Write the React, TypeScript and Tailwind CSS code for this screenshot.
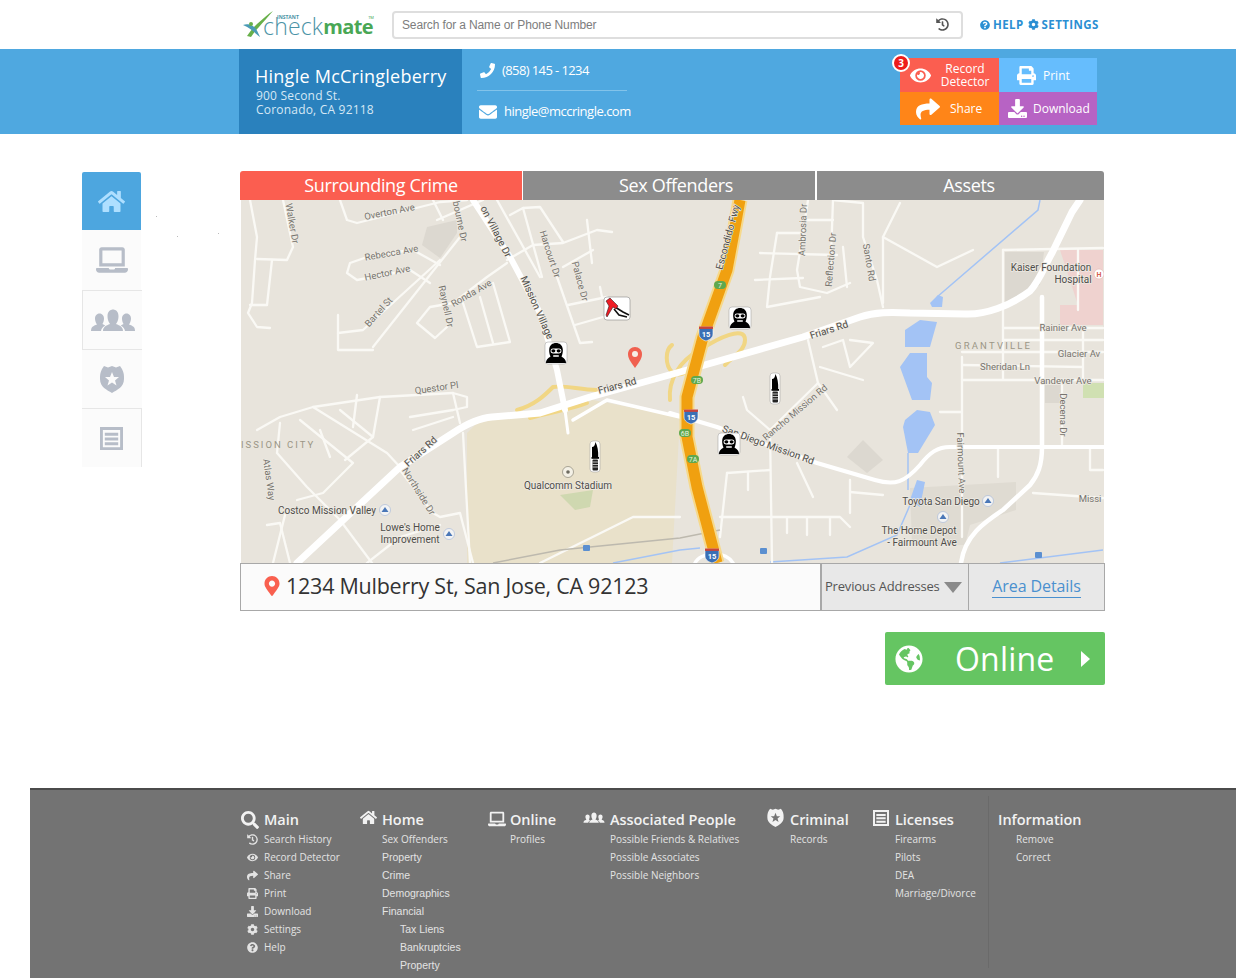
import React from "react";
import {
  FaCog,
  FaDownload,
  FaEnvelope,
  FaEye,
  FaGlobeAmericas,
  FaHistory,
  FaHome,
  FaLaptop,
  FaMapMarkerAlt,
  FaPhoneAlt,
  FaPrint,
  FaQuestionCircle,
  FaSearch,
  FaShare,
} from "react-icons/fa";

const thinRoads = [
  "250,200 257,237 255,260 252,303 248,313 257,327 270,328",
  "283,200 293,247 287,260 257,259",
  "272,260 267,305 250,305",
  "340,200 347,220 357,223 440,202 467,200",
  "437,220 483,200",
  "433,200 443,220",
  "440,265 413,250 373,255 350,263 347,273 357,280 410,270 430,283",
  "460,237 373,347",
  "338,315 338,350 373,350",
  "338,333 363,330 440,260",
  "507,263 487,277 453,303 430,307 417,323 435,338 447,327",
  "463,303 477,347 510,342 493,283",
  "480,297 493,343",
  "510,215 523,208 540,207 563,242",
  "523,208 542,277",
  "497,200 540,277",
  "507,260 533,245 563,243 597,230 612,232",
  "587,220 592,263",
  "563,267 593,250",
  "557,277 580,343 592,342",
  "568,305 607,297",
  "575,325 603,317",
  "600,287 602,297",
  "257,430 280,417 313,407 380,397 453,393 467,397 467,407 453,410",
  "280,423 277,453 307,487 340,520 372,563",
  "313,407 387,453 400,467",
  "300,420 353,463 323,493 297,500",
  "340,410 373,437 345,460",
  "380,397 373,437",
  "410,417 453,410",
  "413,430 453,417",
  "453,393 460,423",
  "357,395 353,427",
  "320,430 330,457",
  "400,470 433,513 440,517 460,513 473,563",
  "463,433 470,563",
  "540,563 633,517 680,517",
  "267,525 280,523 290,563",
  "285,515 273,563",
  "367,563 400,537 440,525",
  "833,200 863,203 863,237 877,280 883,307",
  "808,200 803,233 797,270 800,287 827,293 850,283",
  "833,200 830,283",
  "777,233 770,277 767,307 820,297",
  "777,233 803,233",
  "760,253 837,255",
  "755,280 803,278",
  "807,220 833,220",
  "843,247 847,287",
  "900,203 883,237 937,267 973,250",
  "883,237 883,303",
  "1003,250 1103,248",
  "1003,250 1003,380",
  "1078,250 1078,310",
  "1003,328 1103,328",
  "1003,340 1103,340",
  "962,352 1103,352",
  "962,365 1083,367",
  "962,380 1103,380",
  "962,357 962,537",
  "1083,330 1083,380",
  "1062,380 1062,447",
  "998,447 998,477",
  "1090,447 1090,470 1103,470",
  "1033,493 1103,498",
  "940,412 962,412",
  "808,340 818,383 837,410",
  "818,383 770,430 772,563",
  "743,397 747,410 770,430",
  "823,347 843,340 850,367 873,343 850,340",
  "820,367 863,380",
  "727,473 770,470",
  "727,473 720,537",
  "748,472 748,490",
  "720,517 840,517 850,527",
  "787,518 787,533",
  "807,518 807,535",
  "830,518 830,535",
  "850,480 850,513",
  "850,492 883,495",
  "797,463 813,497",
];

const labels: [string, number, number, number][] = [
  ["Overton Ave", 390, 215, -11],
  ["Walker Dr", 289, 224, 80],
  ["Rebecca Ave", 392, 256, -10],
  ["Hector Ave", 388, 276, -12],
  ["Bartel St", 381, 314, -48],
  ["Raynell Dr", 443, 307, 78],
  ["Ronda Ave", 473, 296, -30],
  ["Harcourt Dr", 547, 255, 72],
  ["Palace Dr", 577, 282, 75],
  ["bourne Dr", 457, 222, 78],
  ["Questor Pl", 437, 391, -8],
  ["Northside Dr", 416, 493, 58],
  ["Atlas Way", 266, 480, 82],
  ["Ambrosia Dr", 806, 230, -88],
  ["Reflection Dr", 834, 260, -85],
  ["Santo Rd", 866, 263, 80],
  ["Rainier Ave", 1063, 331, 0],
  ["Glacier Av", 1079, 357, 0],
  ["Sheridan Ln", 1005, 370, 0],
  ["Vandever Ave", 1063, 384, 0],
  ["Decena Dr", 1060, 415, 90],
  ["Rancho Mission Rd", 797, 415, -40],
  ["Fairmount Ave", 958, 463, 88],
  ["Missi", 1090, 502, 0],
];

const darkLabels: [string, number, number, number][] = [
  ["on Village Dr", 493, 233, 63],
  ["Mission Village", 534, 309, 66],
  ["Friars Rd", 618, 389, -15],
  ["Friars Rd", 423, 454, -42],
  ["Escondido Fwy", 731, 238, -75],
  ["Friars Rd", 830, 333, -18],
  ["San Diego Mission Rd", 767, 448, 20],
  ["Kaiser Foundation", 1051, 271, 0],
  ["Hospital", 1073, 283, 0],
  ["Costco Mission Valley", 327, 514, 0],
  ["Lowe's Home", 410, 531, 0],
  ["Improvement", 410, 543, 0],
  ["Qualcomm Stadium", 568, 489, 0],
  ["Toyota San Diego", 941, 505, 0],
  ["The Home Depot", 919, 534, 0],
  ["- Fairmount Ave", 922, 546, 0],
];

function MapLabel({ text, x, y, rotate, fill, size }: { text: string; x: number; y: number; rotate: number; fill: string; size: number }) {
  return (
    <text
      x={x}
      y={y}
      fill={fill}
      fontSize={size}
      fontFamily="Roboto, sans-serif"
      textAnchor="middle"
      stroke="#eeebe4"
      strokeWidth={1.4}
      paintOrder="stroke"
      transform={rotate ? `rotate(${rotate} ${x} ${y})` : undefined}
    >
      {text}
    </text>
  );
}

function Burglar({ x, y }: { x: number; y: number }) {
  return (
    <g transform={`translate(${x} ${y})`}>
      <rect x="0" y="0" width="22" height="22" rx="3" fill="#fff" stroke="#999" strokeWidth="0.5" />
      <path d="M1 21 C1 17 4 15.5 5.5 14.5 C4.4 12 4 9.5 4.2 7.5 C4.6 3 7.6 1 11 1 C14.4 1 17.4 3 17.8 7.5 C18 9.5 17.6 12 16.5 14.5 C18 15.5 21 17 21 21 Z" fill="#000" />
      <rect x="5.5" y="6.5" width="11" height="5" rx="2.4" fill="#fff" />
      <ellipse cx="8.4" cy="8.8" rx="2" ry="1.6" fill="#000" />
      <ellipse cx="13.6" cy="8.8" rx="2" ry="1.6" fill="#000" />
      <rect x="8" y="13.2" width="6" height="1.5" rx="0.7" fill="#fff" />
    </g>
  );
}

function Knife({ x, y }: { x: number; y: number }) {
  return (
    <g transform={`translate(${x} ${y})`}>
      <rect x="0" y="0" width="10" height="31" rx="3" fill="#fff" stroke="#999" strokeWidth="0.5" />
      <path d="M5.5 1 C7.5 5 8.5 10 8.2 16 L2 16 L2 6 C4 6 5 4 5.5 1 Z" fill="#000" />
      <rect x="1.5" y="16" width="7.5" height="1.8" fill="#000" />
      <rect x="2.5" y="18.5" width="5.5" height="11" rx="1" fill="#222" />
      <path d="M2.5 21 H8 M2.5 23.5 H8 M2.5 26 H8" stroke="#fff" strokeWidth="0.7" />
    </g>
  );
}

function Shield({ x, y }: { x: number; y: number }) {
  return (
    <g transform={`translate(${x} ${y})`}>
      <path d="M-7 -6 H7 L7 1 C7 5 3 7 0 8 C-3 7 -7 5 -7 1 Z" fill="#3a6fb5" stroke="#fff" strokeWidth="0.6" />
      <rect x="-7" y="-6.5" width="14" height="2.4" fill="#c8443c" />
      <text x="0" y="3.5" fontSize="7.5" fontWeight="700" textAnchor="middle" fill="#fff" fontFamily="Roboto, sans-serif">15</text>
    </g>
  );
}

function Exit({ x, y, text }: { x: number; y: number; text: string }) {
  return (
    <g transform={`translate(${x} ${y})`}>
      <rect x="-6" y="-4" width="12" height="8" rx="4" fill="#5ea84f" />
      <text x="0" y="2.7" fontSize="7" textAnchor="middle" fill="#e8f3df" fontFamily="Roboto, sans-serif">{text}</text>
    </g>
  );
}

function Poi({ x, y }: { x: number; y: number }) {
  return (
    <g transform={`translate(${x} ${y})`}>
      <circle r="5.5" fill="#f3f3f3" stroke="#9fb3d6" strokeWidth="0.6" />
      <path d="M-3.5 2 L0 -3 L3.5 2 Z" fill="#4a77b8" />
    </g>
  );
}

function MapDrawing() {
  return (
    <svg viewBox="241 200 863 363" className="block h-[363px] w-[863px]">
      <rect x="241" y="200" width="863" height="363" fill="#e8e4dc" />
      <polygon points="467,433 480,420 540,414 593,400 680,417 672,563 467,563" fill="#e9e1ca" />
      <polygon points="560,495 593,490 590,507 575,510" fill="#cfd8b0" />
      <polygon points="427,227 457,220 457,233 440,258 422,245" fill="#dcd8d0" />
      <polygon points="847,457 863,440 883,460 867,473" fill="#dcd8d0" />
      <polygon points="910,488 1016,482 1016,510 970,525 965,545 912,545" fill="#dfdbd2" />
      <polygon points="1005,252 1044,252 1040,285 1005,303" fill="#dcd8d0" />
      <polygon points="1060,250 1103,250 1103,325 1060,325 1060,305 1078,305" fill="#efd2cf" />
      <rect x="1083" y="383" width="21" height="15" fill="#d0e0b2" />
      <rect x="1045" y="385" width="17" height="18" fill="#dcd8d0" />

      <g fill="#a3c3f5">
        <polygon points="930,303 938,295 943,297 942,307 932,307" />
        <polygon points="905,330 920,320 937,322 930,347 905,347" />
        <polygon points="900,367 910,353 927,353 927,377 932,383 930,400 912,400" />
        <polygon points="905,420 917,410 930,412 935,425 918,453 908,453 903,427" />
        <polygon points="910,500 917,480 925,482 920,507" />
      </g>
      <g fill="none" stroke="#a3c3f5" strokeWidth="1.5">
        <polyline points="937,297 1038,210 1040,200" />
        <polyline points="908,453 908,490" />
        <polyline points="910,505 897,535 847,557 770,562" />
        <polyline points="613,563 680,550 700,548" />
        <polyline points="1000,563 1103,550" />
      </g>

      <g fill="none" stroke="#faf9f5" strokeWidth="2.3" strokeLinejoin="round" strokeLinecap="round">
        {thinRoads.map((points) => (
          <polyline key={points} points={points} />
        ))}
      </g>

      <polyline points="493,563 560,550 680,538 720,530" fill="none" stroke="#bdb9ae" strokeWidth="1.5" />

      <g fill="none" stroke="#f1d684" strokeWidth="4" strokeLinecap="round">
        <path d="M517 410 C535 405 545 395 553 387 C565 385 580 390 597 390" />
        <path d="M530 418 C550 412 570 410 587 403" />
        <path d="M672 345 C665 350 665 365 672 372 C680 378 690 372 695 362" />
        <path d="M670 400 C668 380 680 360 700 350 C718 338 745 325 745 340 C745 350 735 355 725 365" />
      </g>

      <g fill="none" stroke="#fff" strokeLinejoin="round" strokeLinecap="round">
        <polyline strokeWidth="6" points="473,200 510,257 540,313 557,370 565,410" />
        <polyline strokeWidth="3" points="565,410 568,433" />
        <polyline strokeWidth="3.5" points="573,420 607,400 680,417" />
        <path
          strokeWidth="7"
          d="M297 563 L400 467 L453 433 C465 425 478 418 492 417 L540 413 L590 397 L680 372 L803 337 L860 317 C875 312 890 312 910 313 L965 314 C985 315 1010 306 1030 291 C1040 280 1045 265 1052 253 L1072 212 L1080 200"
        />
        <path strokeWidth="4" d="M670 413 L717 427 L817 463 L875 480 C895 486 905 482 920 465 C930 452 938 447 950 447 L1104 447" />
        <path strokeWidth="4.5" d="M1042 297 L1042 447 C1042 465 1038 475 1030 485 L1003 510 C985 522 965 535 961 563" />
        <path strokeWidth="3.5" d="M695 563 C700 552 725 550 733 563" />
      </g>

      <path d="M740 200 L727 270 L703 337 L687 397 L687 437 L697 487 L717 563" fill="none" stroke="#f6d98b" strokeWidth="15" strokeLinejoin="round" />
      <path d="M740 200 L727 270 L703 337 L687 397 L687 437 L697 487 L717 563" fill="none" stroke="#f0a010" strokeWidth="11" strokeLinejoin="round" />

      {labels.map(([text, x, y, rotate]) => (
        <MapLabel key={text + x} text={text} x={x} y={y} rotate={rotate} fill="#77746e" size={9.5} />
      ))}
      {darkLabels.map(([text, x, y, rotate]) => (
        <MapLabel key={text + x} text={text} x={x} y={y} rotate={rotate} fill="#4f4d49" size={10} />
      ))}
      <text x="241" y="448" fontSize="9.5" letterSpacing="2" fill="#9b9686" fontFamily="Roboto, sans-serif">ISSION CITY</text>
      <text x="955" y="349" fontSize="9.5" letterSpacing="2.2" fill="#9b9686" fontFamily="Roboto, sans-serif">GRANTVILLE</text>

      <circle cx="568" cy="472" r="5.5" fill="#f4f1e6" stroke="#8a8778" strokeWidth="0.7" />
      <circle cx="568" cy="472" r="1.8" fill="#6d6b60" />
      <Poi x={385} y={510} />
      <Poi x={449} y={534} />
      <Poi x={988} y={501} />
      <Poi x={943} y={517} />
      <rect x="583" y="545" width="7" height="6" rx="1" fill="#5b8fd0" />
      <rect x="760" y="548" width="7" height="6" rx="1" fill="#5b8fd0" />
      <rect x="1035" y="552" width="7" height="6" rx="1" fill="#5b8fd0" />
      <circle cx="1099" cy="274" r="5" fill="#fff" stroke="#e0b5b0" strokeWidth="0.6" />
      <text x="1099" y="277" fontSize="7" fontWeight="700" textAnchor="middle" fill="#d6604f" fontFamily="Roboto, sans-serif">H</text>

      <Shield x={706} y={333} />
      <Shield x={691} y={416} />
      <Shield x={712} y={555} />
      <Exit x={720} y={285} text="7" />
      <Exit x={697} y={380} text="7B" />
      <Exit x={685} y={433} text="6B" />
      <Exit x={693} y={459} text="7A" />

      <Burglar x={545} y={342} />
      <Burglar x={729} y={307} />
      <Burglar x={718} y={433} />
      <Knife x={590} y={441} />
      <Knife x={770} y={373} />

      <g transform="translate(604 297)">
        <rect x="0" y="0" width="26" height="23" rx="3" fill="#fff" stroke="#888" strokeWidth="0.6" />
        <path d="M11 10 L19 15 L25 18 M10 12 L15 18 L23 20" fill="none" stroke="#111" strokeWidth="1.6" />
        <path d="M2 18 L5 9 L2 4 L6 1 L9 4 L14 9 L12 12 L9 10 L6 15 L3 20 Z" fill="#ee1c25" stroke="#111" strokeWidth="0.5" />
      </g>

      <path d="M635 368 C630 361 628 358 628 354 C628 350 631 347 635 347 C639 347 642 350 642 354 C642 358 640 361 635 368 Z" fill="#f0604f" />
      <circle cx="635" cy="354" r="3" fill="#f6efe6" />
    </svg>
  );
}

function Logo() {
  return (
    <div className="relative flex h-[26px] w-[132px] items-end">
      <svg viewBox="0 0 30 28" className="h-[28px] w-[30px] shrink-0">
        <path d="M4 26 C8 20 11 17 14 14 C20 9 25 4 30 1 C25 7 20 12 16 17 C13 20 10 24 8 27 Z" fill="#68b04a" />
        <path d="M0 15 C6 13 11 16 13 19 C15 22 16 25 17 27 C13 24 9 19 0 15 Z" fill="#4a9bb5" />
        <circle cx="8" cy="14" r="2" fill="#68b04a" />
      </svg>
      <span className="ml-[-10px] font-['Open_Sans',sans-serif] text-[23px] leading-[23px] font-light tracking-[0.2px] text-[#4b93a6]">check</span>
      <span className="font-['Open_Sans',sans-serif] text-[20px] leading-[23px] font-bold tracking-[-0.6px] text-[#49a755]">mate</span>
      <span className="absolute top-[2px] left-[34px] font-['Open_Sans',sans-serif] text-[5px] leading-[6px] font-bold text-[#4b93a6]">INSTANT</span>
      <span className="absolute top-[4px] right-[1px] text-[4px] leading-[4px] text-[#49a755]">TM</span>
    </div>
  );
}

function TopBar() {
  return (
    <div className="flex h-[49px] items-center bg-white pl-[243px]">
      <Logo />
      <div className="ml-[17px] flex h-[28px] w-[571px] items-center justify-between rounded-[4px] border-2 border-[#dedede] pr-[12px] pl-[8px]">
        <span className="font-['Liberation_Sans',sans-serif] text-[12px] tracking-[-0.13px] text-[#7d7d7d]">Search for a Name or Phone Number</span>
        <FaHistory className="text-[13px] text-[#555]" />
      </div>
      <div className="ml-[17px] flex items-center font-['Open_Sans',sans-serif] text-[11.5px] font-bold tracking-[0.4px] text-[#2b8fd3]">
        <FaQuestionCircle className="mr-[3px] text-[10px]" />
        <span>HELP</span>
        <FaCog className="mr-[3px] ml-[4px] text-[11px]" />
        <span>SETTINGS</span>
      </div>
    </div>
  );
}

function ActionCell({ className, children }: { className: string; children: React.ReactNode }) {
  return <div className={`flex items-center text-white ${className}`}>{children}</div>;
}

function ContactBar() {
  return (
    <div className="flex h-[85px] bg-[#4fa8e0] pl-[239px]">
      <div className="flex w-[223px] flex-col bg-[#2a81bd] pt-[14px] pl-[16px] font-['Open_Sans',sans-serif] text-white">
        <div className="text-[18px] leading-[26px] tracking-[0.25px]">Hingle McCringleberry</div>
        <div className="pl-[1px] text-[12px] leading-[14px] tracking-[0.2px] text-[#d6e8f5]">900 Second St.</div>
        <div className="pl-[1px] text-[12px] leading-[14px] tracking-[0.2px] text-[#d6e8f5]">Coronado, CA 92118</div>
      </div>
      <div className="ml-[15px] flex w-[165px] flex-col font-['Open_Sans',sans-serif] text-white">
        <div className="flex h-[42px] w-[150px] items-center border-b border-[#82c3ea] pt-[2px] pl-[4px] text-[13px] tracking-[-0.6px]">
          <FaPhoneAlt className="mr-[4px] ml-[-1px] -scale-x-100 text-[15px]" />
          <span className="ml-[3px]">(858) 145 - 1234</span>
        </div>
        <div className="flex h-[42px] items-center pl-[2px] text-[13px] tracking-[-0.5px]">
          <FaEnvelope className="text-[18px]" />
          <span className="ml-[7px]">hingle@mccringle.com</span>
        </div>
      </div>
      <div className="relative mt-[9px] ml-[258px] grid h-[67px] w-[197px] grid-cols-[99px_98px] grid-rows-[34px_33px] font-['Open_Sans',sans-serif] text-[12px] leading-[13px]">
        <ActionCell className="bg-[#fb5e50] pl-[10px]">
          <FaEye className="text-[21px]" />
          <span className="ml-[6px] w-[56px] text-center">Record Detector</span>
        </ActionCell>
        <ActionCell className="bg-[#66bdfd] pl-[18px]">
          <FaPrint className="text-[19px]" />
          <span className="ml-[7px]">Print</span>
        </ActionCell>
        <ActionCell className="bg-[#ff8518] pl-[16px]">
          <FaShare className="text-[24px]" />
          <span className="ml-[10px]">Share</span>
        </ActionCell>
        <ActionCell className="bg-[#b763c4] pl-[9px]">
          <FaDownload className="text-[19px]" />
          <span className="ml-[6px]">Download</span>
        </ActionCell>
        <span className="absolute top-[-4px] left-[-8px] flex h-[18px] w-[18px] items-center justify-center rounded-full border-2 border-white bg-[#ee1c1c] text-[10px] font-bold text-white">3</span>
      </div>
    </div>
  );
}

function BadgeIcon({ className }: { className: string }) {
  return (
    <svg viewBox="0 0 24 28" className={className} fill="currentColor">
      <path
        fillRule="evenodd"
        d="M4 1 L8 2.5 L12 1 L16 2.5 L20 1 L22 4 C24 8 24 10 24 14 C24 22 17 25 12 28 C7 25 0 22 0 14 C0 10 0 8 2 4 Z M12 7 L14 12 L19 12 L15 15.5 L16.5 20.5 L12 17.5 L7.5 20.5 L9 15.5 L5 12 L10 12 Z"
      />
    </svg>
  );
}

function ListIcon({ className }: { className: string }) {
  return (
    <svg viewBox="0 0 24 24" className={className} fill="currentColor">
      <path fillRule="evenodd" d="M0 0 H24 V24 H0 Z M3 3 V21 H21 V3 Z" />
      <path d="M5 6 H19 V9 H5 Z M5 11 H19 V14 H5 Z M5 16 H19 V19 H5 Z" />
    </svg>
  );
}

function PeopleIcon({ className }: { className: string }) {
  return (
    <svg viewBox="0 0 46 22" className={className} fill="currentColor">
      <path d="M1 22 C1 18 3 17 7 15.5 C5.5 13.5 5 11 5 9.5 C5 6 7.5 4.5 9.5 4.5 C11.5 4.5 14 6 14 9.5 C14 11 13.6 13.4 12.4 15 C13.5 15.6 14.5 16 15.2 16.5 C12.5 18 11.5 19.5 11 22 Z" />
      <path d="M45 22 C45 18 43 17 39 15.5 C40.5 13.5 41 11 41 9.5 C41 6 38.5 4.5 36.5 4.5 C34.5 4.5 32 6 32 9.5 C32 11 32.4 13.4 33.6 15 C32.5 15.6 31.5 16 30.8 16.5 C33.5 18 34.5 19.5 35 22 Z" />
      <path d="M13 22 C13 18 16 16.5 20 15 C18 12.5 17.5 9.5 17.5 7 C17.5 2.5 20.5 0.5 23 0.5 C25.5 0.5 28.5 2.5 28.5 7 C28.5 9.5 28 12.5 26 15 C30 16.5 33 18 33 22 Z" />
    </svg>
  );
}

function SideNav() {
  return (
    <div className="mt-[1px] flex w-[60px] flex-col text-[#b7bdc8]">
      <div className="flex h-[58px] w-[59px] items-center justify-center rounded-t-[2px] bg-[#4da6df] text-[#aedfff]">
        <FaHome className="text-[27px]" />
      </div>
      <div className="flex h-[60px] w-[59px] items-center justify-center bg-[#fbfbfb]">
        <FaLaptop className="text-[32px]" />
      </div>
      <div className="flex h-[59px] items-center justify-center border-t border-l border-[#e6e6e6] bg-[#fbfbfb]">
        <PeopleIcon className="h-[22px] w-[46px]" />
      </div>
      <div className="flex h-[59px] items-center justify-center border-t border-[#e6e6e6] bg-[#fbfbfb]">
        <BadgeIcon className="h-[28px] w-[24px]" />
      </div>
      <div className="flex h-[59px] items-center justify-center border-t border-r border-[#e6e6e6] bg-[#fbfbfb]">
        <ListIcon className="h-[23px] w-[23px]" />
      </div>
    </div>
  );
}

function Tabs() {
  return (
    <div className="flex h-[29px] font-['Open_Sans',sans-serif] text-[18px] leading-[29px] text-white">
      <div className="w-[282px] rounded-tl-[3px] bg-[#fb5e50] text-center tracking-[-0.35px]">Surrounding Crime</div>
      <div className="ml-[1px] w-[292px] bg-[#8c8c8c] pl-[14px] text-center tracking-[-0.35px]">Sex Offenders</div>
      <div className="ml-[2px] w-[287px] rounded-tr-[3px] bg-[#8c8c8c] pl-[17px] text-center tracking-[-0.35px]">Assets</div>
    </div>
  );
}

function AddressBar() {
  return (
    <div className="flex h-[48px] w-[865px] border border-[#a8a8a8] font-['Open_Sans',sans-serif]">
      <div className="flex w-[579px] items-center bg-[#fbfbfb] pb-[2px] pl-[21px] text-[21.5px] tracking-[-0.25px] text-[#333]">
        <FaMapMarkerAlt className="mr-[4px] text-[20px] text-[#f9604f]" />
        <span>1234 Mulberry St, San Jose, CA 92123</span>
      </div>
      <div className="flex w-[148px] items-center border-l-2 border-[#a8a8a8] bg-[#e8e8e8] pl-[3px] text-[13px] tracking-[-0.2px] text-[#555]">
        <span>Previous Addresses</span>
        <span className="ml-[4px] h-0 w-0 border-x-[9px] border-t-[11px] border-x-transparent border-t-[#8a8a8a]" />
      </div>
      <div className="flex flex-1 items-center justify-center border-l border-[#a8a8a8] bg-[#e8e8e8] text-[16px] tracking-[-0.1px] text-[#4a90cf]">
        <span className="border-b border-[#4a90cf] leading-[21px]">Area Details</span>
      </div>
    </div>
  );
}

function OnlineButton() {
  return (
    <div className="mt-[21px] ml-[645px] flex h-[53px] w-[220px] items-center rounded-[2px] bg-[#65c562] pl-[10px] font-['Open_Sans',sans-serif] text-white">
      <FaGlobeAmericas className="text-[28px]" />
      <span className="ml-[32px] text-[32px] leading-[40px] tracking-[0.2px]">Online</span>
      <span className="ml-[27px] h-0 w-0 border-y-[8px] border-l-[9px] border-y-transparent border-l-white" />
    </div>
  );
}

type FooterColumnProps = {
  width: string;
  icon?: React.ReactNode;
  title: string;
  items: string[];
  indent: string;
  className?: string;
};

const footerTitle = "flex h-[20px] items-center text-[14.5px] font-semibold tracking-[-0.05px] text-[#f2f2f2]";
const footerList = "text-[10px] leading-[18px] text-[#e3e3e3]";

function FooterColumn({ width, icon, title, items, indent, className }: FooterColumnProps) {
  return (
    <div className={`${width} ${className ?? ""} shrink-0`}>
      <div className={footerTitle}>
        {icon}
        <span>{title}</span>
      </div>
      <div className={`${indent} ${footerList}`}>
        {items.map((item) => (
          <div key={item} className="h-[18px]">
            {item}
          </div>
        ))}
      </div>
    </div>
  );
}

const mainItems: [React.ReactNode, string][] = [
  [<FaHistory key="a" />, "Search History"],
  [<FaEye key="b" />, "Record Detector"],
  [<FaShare key="c" />, "Share"],
  [<FaPrint key="d" />, "Print"],
  [<FaDownload key="e" />, "Download"],
  [<FaCog key="f" />, "Settings"],
  [<FaQuestionCircle key="g" />, "Help"],
];

function Footer() {
  return (
    <div className="ml-[30px] flex h-[190px] border-t-2 border-[#4b4b4b] bg-[#737373] pt-[20px] pl-[211px] font-['Open_Sans',sans-serif]">
      <div className="w-[119px] shrink-0">
        <div className={footerTitle}>
          <FaSearch className="mr-[5px] text-[18px]" />
          <span>Main</span>
        </div>
        <div className={footerList}>
          {mainItems.map(([icon, label]) => (
            <div key={label} className="flex h-[18px] items-center">
              <span className="flex w-[23px] justify-center text-[11px]">{icon}</span>
              <span>{label}</span>
            </div>
          ))}
        </div>
      </div>
      <div className="w-[128px] shrink-0">
        <div className={footerTitle}>
          <FaHome className="mr-[5px] mb-[5px] text-[17px]" />
          <span>Home</span>
        </div>
        <div className={`pl-[22px] ${footerList}`}>
          <div>Sex Offenders</div>
          <div className="font-['Liberation_Sans',sans-serif] text-[10.5px]">Property</div>
          <div className="font-['Liberation_Sans',sans-serif] text-[10.5px]">Crime</div>
          <div className="font-['Liberation_Sans',sans-serif] text-[10.5px]">Demographics</div>
          <div className="font-['Liberation_Sans',sans-serif] text-[10.5px]">Financial</div>
          <div className="pl-[18px] font-['Liberation_Sans',sans-serif] text-[10.5px]">Tax Liens</div>
          <div className="pl-[18px] font-['Liberation_Sans',sans-serif] text-[10.5px]">Bankruptcies</div>
          <div className="pl-[18px] font-['Liberation_Sans',sans-serif] text-[10.5px]">Property</div>
        </div>
      </div>
      <FooterColumn
        width="w-[95px]"
        icon={<FaLaptop className="mr-[4px] mb-[3px] text-[18px]" />}
        title="Online"
        items={["Profiles"]}
        indent="pl-[22px]"
      />
      <FooterColumn
        width="w-[184px]"
        icon={<PeopleIcon className="mr-[5px] mb-[5px] h-[11px] w-[22px]" />}
        title="Associated People"
        items={["Possible Friends & Relatives", "Possible Associates", "Possible Neighbors"]}
        indent="pl-[27px]"
      />
      <FooterColumn
        width="w-[106px]"
        icon={<BadgeIcon className="mr-[6px] mb-[5px] h-[19px] w-[17px]" />}
        title="Criminal"
        items={["Records"]}
        indent="pl-[23px]"
      />
      <FooterColumn
        width="w-[115px]"
        icon={<ListIcon className="mr-[6px] mb-[4px] h-[16px] w-[16px]" />}
        title="Licenses"
        items={["Firearms", "Pilots", "DEA", "Marriage/Divorce"]}
        indent="pl-[22px]"
      />
      <FooterColumn
        width="w-[110px]"
        title="Information"
        items={["Remove", "Correct"]}
        indent="pl-[18px]"
        className="mt-[-14px] h-[172px] border-l border-[#6a6a6a] pt-[14px] pl-[9px]"
      />
    </div>
  );
}

export default function App() {
  return (
    <div className="h-[979px] w-[1236px] overflow-hidden bg-white">
      <TopBar />
      <ContactBar />
      <div className="relative flex h-[654px] pt-[37px] pl-[82px]">
        <span className="absolute top-[82px] left-[156px] h-px w-px bg-[#bbb]" />
        <span className="absolute top-[102px] left-[177px] h-px w-px bg-[#bbb]" />
        <span className="absolute top-[99px] left-[218px] h-px w-px bg-[#bbb]" />
        <SideNav />
        <div className="ml-[98px]">
          <Tabs />
          <div className="ml-[1px] w-[863px] border-r border-[#999]">
            <MapDrawing />
          </div>
          <AddressBar />
          <OnlineButton />
        </div>
      </div>
      <Footer />
    </div>
  );
}
